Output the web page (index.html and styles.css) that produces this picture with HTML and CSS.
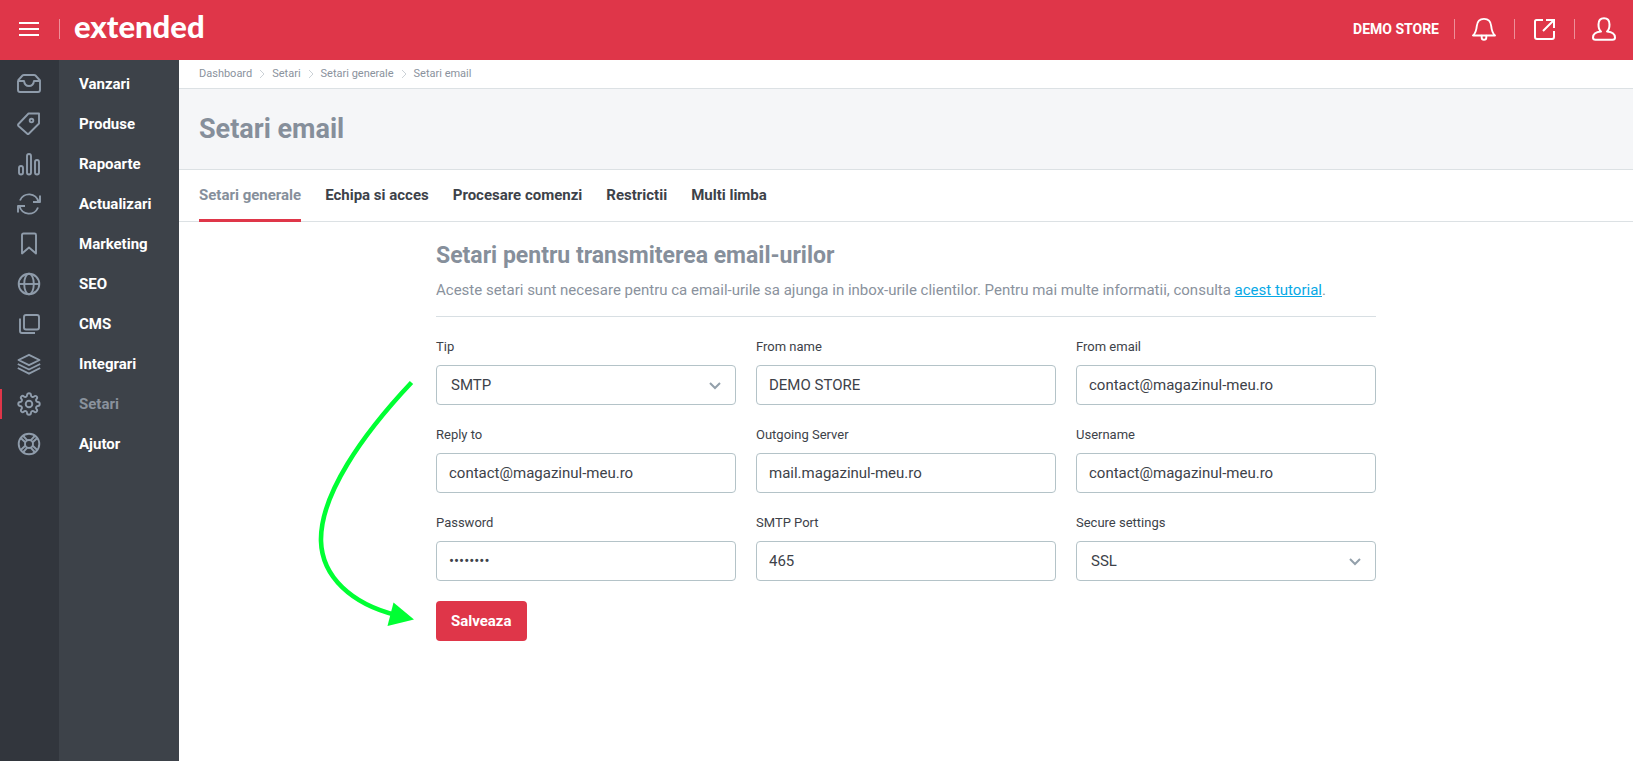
FILE: index.html
```html
<!DOCTYPE html>
<html lang="ro">
<head>
<meta charset="utf-8">
<title>Setari email</title>
<link rel="stylesheet" href="styles.css">
</head>
<body>
<header class="topbar">
  <button class="icon-btn menu-btn" type="button" aria-label="Meniu">
    <svg width="20" height="16" viewBox="0 0 20 16" fill="none" stroke="#fff" stroke-width="2"><path d="M0 2h20M0 8h20M0 14h20"/></svg>
  </button>
  <a class="logo" href="#">extended</a>
  <div class="actions">
    <span class="store">DEMO STORE</span>
    <button class="icon-btn action" type="button" aria-label="Notificari">
      <svg width="24" height="24" viewBox="0 0 24 24" fill="none" stroke="#fff" stroke-width="1.9" stroke-linejoin="round" stroke-linecap="round"><path d="M1 18.500H23C20 16 19.600 13 19.200 9C18.700 4 16 1.900 12 1.900S5.300 4 4.800 9C4.400 13 4 16 1 18.500Z"/><path d="M9.700 18.800V20.500a2.300 2.300 0 0 0 4.600 0V18.800"/></svg>
    </button>
    <button class="icon-btn action" type="button" aria-label="Deschide magazinul">
      <svg width="24" height="24" viewBox="0 0 24 24" fill="none" stroke="#fff" stroke-width="2"><path d="M11 3H4.500Q3 3 3 4.500V20Q3 22 5 22H20Q22 22 22 20V14"/><path d="M14 3H22V11M22 3L11 14"/></svg>
    </button>
    <button class="icon-btn action" type="button" aria-label="Cont">
      <svg width="24" height="24" viewBox="0 0 24 24" fill="none" stroke="#fff" stroke-width="2" stroke-linejoin="round"><path d="M9 14.500C7 13 6.500 10 6.500 7.500C6.500 3.500 8.500 1.200 12 1.200S17.500 3.500 17.500 7.500C17.500 10 17 13 15 14.500C20 15 23 17 23 20.500Q23 22.800 20.500 22.800H3.500Q1 22.800 1 20.500C1 17 4 15 9 14.500Z"/></svg>
    </button>
  </div>
</header>
<div class="shell">
  <nav class="sidebar" aria-label="Meniu principal">
    <a class="item" href="#"><span class="item-icon"><svg viewBox="0 0 24 24"><path d="M1 8.500L5.500 3.500Q6 3 7 3H17Q18 3 18.500 3.500L23 8.500V18Q23 20 21 20H3Q1 20 1 18V9H7Q7.700 14 12 14T17 9H23"/></svg></span><span class="item-name">Vanzari</span></a>
    <a class="item" href="#"><span class="item-icon"><svg viewBox="0 0 24 24"><path d="M11.500 1.500H22V11.500L12 21.500Q11 22.500 10 21.500L1.500 14Q.6 13 1.500 12Z"/><circle cx="14.500" cy="8.500" r="1.800"/></svg></span><span class="item-name">Produse</span></a>
    <a class="item" href="#"><span class="item-icon"><svg viewBox="0 0 24 24"><rect x="2" y="14" width="4" height="8.500" rx="2"/><rect x="10" y="2" width="4" height="20.500" rx="2"/><rect x="18" y="8" width="4" height="14.500" rx="2"/></svg></span><span class="item-name">Rapoarte</span></a>
    <a class="item" href="#"><span class="item-icon"><svg viewBox="0 0 24 24"><path d="M3 8.500A9.700 9.700 0 0 1 21.500 10M21 15.500A9.700 9.700 0 0 1 2.500 14M23 3.500V10H16M1 20.500V14H8"/></svg></span><span class="item-name">Actualizari</span></a>
    <a class="item" href="#"><span class="item-icon"><svg viewBox="0 0 24 24"><path d="M5 3Q5 1.500 6.500 1.500H17.500Q19 1.500 19 3V21.500L12 15.500L5 21.500Z"/></svg></span><span class="item-name">Marketing</span></a>
    <a class="item" href="#"><span class="item-icon"><svg viewBox="0 0 24 24"><circle cx="12" cy="12" r="10.300"/><path d="M1.700 12H22.300"/><ellipse cx="12" cy="12" rx="4.800" ry="10.300"/></svg></span><span class="item-name">SEO</span></a>
    <a class="item" href="#"><span class="item-icon"><svg viewBox="0 0 24 24"><rect x="7" y="3" width="15" height="14.500" rx="2"/><path d="M3 6.500V19Q3 21 5 21H18"/></svg></span><span class="item-name">CMS</span></a>
    <a class="item" href="#"><span class="item-icon"><svg viewBox="0 0 24 24"><path d="M12 2.800L22.500 8L12 13.200L1.500 8ZM.8 12L12 17.500L23.200 12M.8 16L12 21.700L23.200 16"/></svg></span><span class="item-name">Integrari</span></a>
    <a class="item active" href="#" aria-current="page"><span class="item-icon"><svg viewBox="0 0 24 24"><circle cx="12" cy="12" r="3.300"/><path d="M10 3.200C10 .6 14 .6 14 3.200C14 4.800 15.800 5.600 17 4.500C18.800 2.700 21.300 5.200 19.500 7C18.400 8.200 19.200 10 20.800 10C23.400 10 23.400 14 20.800 14C19.200 14 18.400 15.800 19.500 17C21.300 18.800 18.800 21.300 17 19.500C15.800 18.400 14 19.200 14 20.800C14 23.400 10 23.400 10 20.800C10 19.200 8.200 18.400 7 19.500C5.200 21.300 2.700 18.800 4.500 17C5.600 15.800 4.800 14 3.200 14C.6 14 .6 10 3.200 10C4.800 10 5.600 8.200 4.500 7C2.700 5.200 5.200 2.700 7 4.500C8.200 5.600 10 4.800 10 3.200Z"/></svg></span><span class="item-name">Setari</span></a>
    <a class="item" href="#"><span class="item-icon"><svg viewBox="0 0 24 24"><circle cx="12" cy="12" r="10.300"/><circle cx="12" cy="12" r="4"/><path d="M4 6.300L8.300 10.300M6.300 4L10.300 8.300M20 6.300L15.700 10.300M17.700 4L13.700 8.300M4 17.700L8.300 13.700M6.300 20L10.300 15.700M20 17.700L15.700 13.700M17.700 20L13.700 15.700"/></svg></span><span class="item-name">Ajutor</span></a>
  </nav>
  <main class="content">
    <nav class="breadcrumb" aria-label="Cale">
      <a href="#">Dashboard</a>
      <svg class="crumb-sep" viewBox="0 0 6 8"><path d="M1 0L5 4L1 8"/></svg>
      <a href="#">Setari</a>
      <svg class="crumb-sep" viewBox="0 0 6 8"><path d="M1 0L5 4L1 8"/></svg>
      <a href="#">Setari generale</a>
      <svg class="crumb-sep" viewBox="0 0 6 8"><path d="M1 0L5 4L1 8"/></svg>
      <a href="#">Setari email</a>
    </nav>
    <div class="page-head"><h1>Setari email</h1></div>
    <nav class="tabs" aria-label="Sectiuni">
      <a class="tab current" href="#">Setari generale</a>
      <a class="tab" href="#">Echipa si acces</a>
      <a class="tab" href="#">Procesare comenzi</a>
      <a class="tab" href="#">Restrictii</a>
      <a class="tab" href="#">Multi limba</a>
    </nav>
    <section class="panel">
      <div class="intro">
        <h2>Setari pentru transmiterea email-urilor</h2>
        <p>Aceste setari sunt necesare pentru ca email-urile sa ajunga in inbox-urile clientilor. Pentru mai multe informatii, consulta <a href="#">acest tutorial</a>.</p>
      </div>
      <form class="form">
        <div class="fields">
          <div class="field">
            <label for="type">Tip</label>
            <div class="select-wrap"><select id="type"><option>SMTP</option></select><svg class="chevron" viewBox="0 0 12 8"><path d="M1 1L6 6L11 1"/></svg></div>
          </div>
          <div class="field"><label for="from-name">From name</label><input id="from-name" type="text" value="DEMO STORE"></div>
          <div class="field"><label for="from-email">From email</label><input id="from-email" type="email" value="contact@magazinul-meu.ro"></div>
          <div class="field"><label for="reply-to">Reply to</label><input id="reply-to" type="email" value="contact@magazinul-meu.ro"></div>
          <div class="field"><label for="server">Outgoing Server</label><input id="server" type="text" value="mail.magazinul-meu.ro"></div>
          <div class="field"><label for="username">Username</label><input id="username" type="text" value="contact@magazinul-meu.ro"></div>
          <div class="field"><label for="password">Password</label><input id="password" type="password" value="password"></div>
          <div class="field"><label for="port">SMTP Port</label><input id="port" type="text" value="465"></div>
          <div class="field">
            <label for="secure">Secure settings</label>
            <div class="select-wrap"><select id="secure"><option>SSL</option></select><svg class="chevron" viewBox="0 0 12 8"><path d="M1 1L6 6L11 1"/></svg></div>
          </div>
        </div>
        <button class="save" type="submit">Salveaza</button>
        <svg class="arrow" width="120" height="260" viewBox="0 0 120 260"><path d="M95.500 12.500C46 65 4 125 5 171C6 207 36 234 80 245" fill="none" stroke="#0f3" stroke-width="4.600"/><path d="M77.500 232.500L98 249.500L71.500 256Z" fill="#0f3"/></svg>
      </form>
    </section>
  </main>
</div>
</body>
</html>
```
FILE: styles.css
```css
* { box-sizing: border-box; }

body {
  margin: 0;
  min-height: 100vh;
  display: flex;
  flex-direction: column;
  background: #fff;
  color: #3d4249;
  font-family: Roboto, "Liberation Sans", sans-serif;
  font-size: 15px;
  line-height: 20px;
}

a { color: inherit; text-decoration: none; }
h1, h2, p { margin: 0; }
input, select, button { font: inherit; color: inherit; }

/* Top bar */
.topbar {
  display: flex;
  align-items: center;
  height: 60px;
  padding-bottom: 2px;
  background: #df3649;
  color: #fff;
}
.icon-btn {
  display: flex;
  align-items: center;
  justify-content: center;
  padding: 0;
  border: 0;
  background: none;
}
.icon-btn svg { display: block; flex: none; }
.menu-btn { width: 59px; height: 20px; padding-right: 1px; }
.logo {
  display: flex;
  align-items: center;
  height: 20px;
  padding: 0 0 6px 14px;
  border-left: 1px solid #ee8f99;
  font-family: Lato, sans-serif;
  font-size: 31px;
  font-weight: 900;
}
.actions { display: flex; align-items: center; margin-left: auto; }
.store { padding-right: 15px; font-size: 14px; font-weight: 700; }
.action { width: 60px; height: 20px; padding-right: 2px; border-left: 1px solid #ee8f99; }
.action:last-child { width: 59px; padding-right: 1px; }

/* Main menu */
.shell { display: flex; flex: 1; }
.sidebar {
  flex: none;
  width: 179px;
  padding-top: 4px;
  background: linear-gradient(to right, #32363d 59px, #3d4249 59px);
}
.item { display: flex; align-items: center; height: 40px; color: #fff; font-weight: 700; }
.item-icon {
  display: flex;
  align-items: center;
  justify-content: center;
  width: 58px;
  height: 30px;
}
.item-icon svg {
  width: 24px;
  height: 24px;
  fill: none;
  stroke: #8f9cab;
  stroke-width: 1.9;
  stroke-linejoin: round;
}
.item-name { padding-left: 21px; }
.item.active { color: #8a929d; }
.active .item-icon { border-left: 2px solid #df3649; padding-right: 2px; }

/* Page header */
.content { flex: 1; min-width: 0; }
.breadcrumb {
  display: flex;
  align-items: center;
  height: 29px;
  padding: 0 20px;
  border-bottom: 1px solid #dce1e4;
  color: #8a929d;
  font-size: 11px;
}
.crumb-sep { width: 6px; height: 8px; margin: 0 7px; fill: none; stroke: #ccd2d7; }
.page-head {
  display: flex;
  align-items: center;
  height: 81px;
  padding: 0 20px;
  border-bottom: 1px solid #dce1e4;
  background: #f5f6f8;
}
h1 { color: #868f9b; font-size: 27px; line-height: 32px; }
.tabs {
  display: flex;
  gap: 24px;
  height: 52px;
  padding: 0 20px;
  border-bottom: 1px solid #dce1e4;
  font-weight: 700;
}
.tab { height: 52px; padding-top: 15px; }
.tab.current { border-bottom: 3px solid #df3649; color: #868f9b; }

/* Settings form */
.panel { max-width: 940px; margin: 0 auto; padding-top: 18px; }
.intro { padding-bottom: 16px; border-bottom: 1px solid #d8dfe3; color: #8a929d; }
h2 { margin-bottom: 8px; color: #868f9b; font-size: 23px; line-height: 32px; }
.intro a { color: #08a9e6; text-decoration: underline; }
.form { position: relative; padding-top: 20px; }
.fields { display: grid; grid-template-columns: repeat(3, 1fr); gap: 20px; }
.field label { display: block; margin-bottom: 8px; font-size: 13px; }
.field input, .field select {
  display: block;
  width: 100%;
  height: 40px;
  padding: 0 12px;
  border: 1px solid #b4c3c8;
  border-radius: 4px;
  background: #fff;
}
.select-wrap { position: relative; }
.field select { appearance: none; padding: 0 40px 0 14px; }
.chevron {
  position: absolute;
  top: 17px;
  right: 15px;
  width: 12px;
  height: 8px;
  fill: none;
  stroke: #93a0ab;
  stroke-width: 2;
  pointer-events: none;
}
.save {
  display: block;
  height: 40px;
  margin-top: 20px;
  padding: 0 15px;
  border: 0;
  border-radius: 4px;
  background: #df3649;
  color: #fff;
  font-weight: 700;
}
.arrow { position: absolute; top: 53px; left: -120px; pointer-events: none; }
```
